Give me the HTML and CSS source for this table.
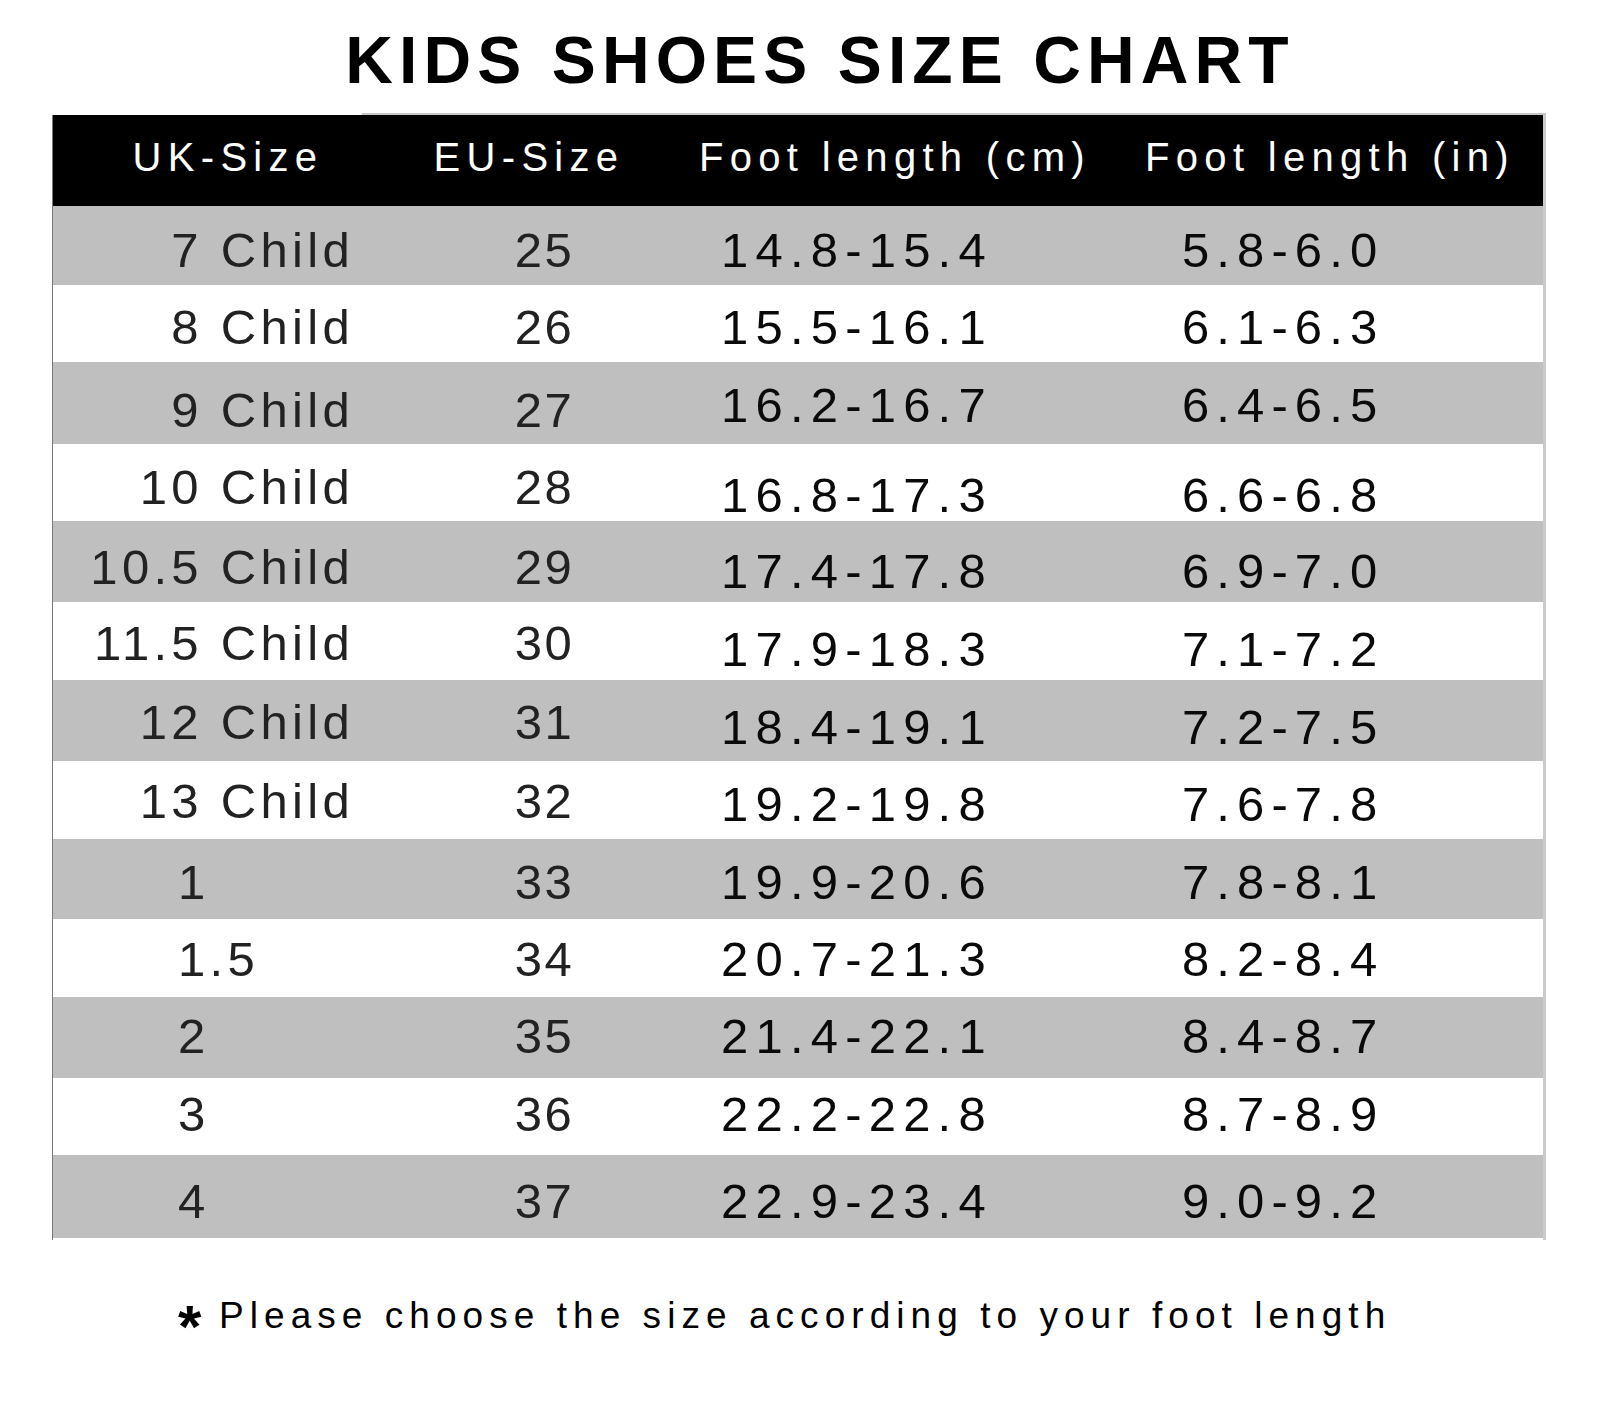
FILE: index.html
```html
<!DOCTYPE html>
<html lang="en">
<head>
<meta charset="utf-8">
<title>Kids Shoes Size Chart</title>
<link rel="stylesheet" href="styles.css">
</head>
<body>
<div class="page">
  <h1 class="title">KIDS SHOES SIZE CHART</h1>
  <div class="rule"></div>
  <div class="chart">
    <div class="head">
      <div class="hcell">UK-Size</div>
      <div class="hcell">EU-Size</div>
      <div class="hcell">Foot length (cm)</div>
      <div class="hcell">Foot length (in)</div>
    </div>
    <div class="rows">
      <div class="row gray">
        <div class="cell uk child dn9">7 Child</div><div class="cell eu dn9">25</div><div class="cell cm dn9">14.8-15.4</div><div class="cell in dn9">5.8-6.0</div>
      </div>
      <div class="row">
        <div class="cell uk child dn7">8 Child</div><div class="cell eu dn7">26</div><div class="cell cm dn7">15.5-16.1</div><div class="cell in dn7">6.1-6.3</div>
      </div>
      <div class="row gray">
        <div class="cell uk child dn14">9 Child</div><div class="cell eu dn14">27</div><div class="cell cm dn4">16.2-16.7</div><div class="cell in dn4">6.4-6.5</div>
      </div>
      <div class="row">
        <div class="cell uk child dn7">10 Child</div><div class="cell eu dn7">28</div><div class="cell cm dn23">16.8-17.3</div><div class="cell in dn23">6.6-6.8</div>
      </div>
      <div class="row gray">
        <div class="cell uk child dn11">10.5 Child</div><div class="cell eu dn11">29</div><div class="cell cm dn19">17.4-17.8</div><div class="cell in dn19">6.9-7.0</div>
      </div>
      <div class="row">
        <div class="cell uk child dn4">11.5 Child</div><div class="cell eu dn4">30</div><div class="cell cm dn16">17.9-18.3</div><div class="cell in dn16">7.1-7.2</div>
      </div>
      <div class="row gray">
        <div class="cell uk child dn3">12 Child</div><div class="cell eu dn3">31</div><div class="cell cm dn13">18.4-19.1</div><div class="cell in dn13">7.2-7.5</div>
      </div>
      <div class="row">
        <div class="cell uk child dn2">13 Child</div><div class="cell eu dn2">32</div><div class="cell cm dn8">19.2-19.8</div><div class="cell in dn8">7.6-7.8</div>
      </div>
      <div class="row gray">
        <div class="cell uk dn6">1</div><div class="cell eu dn6">33</div><div class="cell cm dn6">19.9-20.6</div><div class="cell in dn6">7.8-8.1</div>
      </div>
      <div class="row">
        <div class="cell uk dn2">1.5</div><div class="cell eu dn2">34</div><div class="cell cm dn2">20.7-21.3</div><div class="cell in dn2">8.2-8.4</div>
      </div>
      <div class="row gray">
        <div class="cell uk up3">2</div><div class="cell eu up3">35</div><div class="cell cm up3">21.4-22.1</div><div class="cell in up3">8.4-8.7</div>
      </div>
      <div class="row">
        <div class="cell uk up5">3</div><div class="cell eu up5">36</div><div class="cell cm up5">22.2-22.8</div><div class="cell in up5">8.7-8.9</div>
      </div>
      <div class="row gray">
        <div class="cell uk dn9">4</div><div class="cell eu dn9">37</div><div class="cell cm dn9">22.9-23.4</div><div class="cell in dn9">9.0-9.2</div>
      </div>
    </div>
  </div>
  <p class="note"><span class="star">*</span>Please choose the size according to your foot length</p>
</div>
</body>
</html>
```

FILE: styles.css
```css
* { box-sizing: border-box; }

html, body {
  margin: 0;
  padding: 0;
  background: #ffffff;
}

.page {
  width: 1600px;
  height: 1413px;
  overflow: hidden;
  font-family: "Liberation Sans", Arial, sans-serif;
  color: #000;
}

.title {
  margin: 0;
  padding-top: 27px;
  padding-left: 40px;
  height: 93px;
  font-size: 66px;
  line-height: 66px;
  font-weight: 700;
  letter-spacing: 6.1px;
  text-align: center;
  color: #000;
}

.rule {
  margin-top: 20px;
  margin-left: 362px;
  width: 1184px;
  height: 2px;
  background: #c6c6c6;
}

.chart {
  margin-left: 52px;
  width: 1494px;
  border-left: 1px solid #7a7a7a;
  border-right: 3px solid #cacaca;
  padding-bottom: 2px;
}

.head {
  display: grid;
  grid-template-columns: 344px 258px 474px 396px;
  height: 91px;
  background: #000;
  color: #fff;
}

.hcell {
  display: flex;
  align-items: center;
  justify-content: center;
  padding-left: 6px;
  padding-bottom: 6px;
  font-size: 40px;
  letter-spacing: 6.3px;
  white-space: nowrap;
}

.rows {
  display: grid;
  grid-template-rows: 79px 77px 82px 77px 81px 78px 81px 78px 80px 78px 81px 77px 83px;
}

.row {
  display: grid;
  grid-template-columns: 327px 326px 454px 1fr;
  background: #ffffff;
}

.row.gray {
  background: #bfbfbf;
}

.cell {
  display: flex;
  align-items: center;
  font-size: 49px;
  letter-spacing: 4.3px;
  white-space: nowrap;
}

.uk {
  color: #222;
  padding-left: 125px;
}

.uk.child {
  justify-content: flex-end;
  padding-left: 0;
  padding-right: 26px;
}

.eu {
  color: #222;
  justify-content: center;
  padding-left: 3px;
  letter-spacing: 2.6px;
}

.cm {
  color: #0a0a0a;
  padding-left: 15px;
  letter-spacing: 7.2px;
}

.in {
  color: #0a0a0a;
  padding-left: 22px;
  letter-spacing: 7.1px;
}

.dn2 { padding-top: 2px; }
.dn3 { padding-top: 3px; }
.dn4 { padding-top: 4px; }
.dn6 { padding-top: 6px; }
.dn7 { padding-top: 7px; }
.dn8 { padding-top: 8px; }
.dn9 { padding-top: 9px; }
.dn11 { padding-top: 11px; }
.dn13 { padding-top: 13px; }
.dn14 { padding-top: 14px; }
.dn16 { padding-top: 16px; }
.dn19 { padding-top: 19px; }
.dn23 { padding-top: 23px; }
.up3 { padding-bottom: 3px; }
.up5 { padding-bottom: 5px; }

.note {
  margin: 55px 0 0 0;
  padding-left: 178px;
  font-size: 37px;
  line-height: 42px;
  letter-spacing: 6.05px;
  white-space: nowrap;
  color: #000;
}

.star {
  display: inline-block;
  width: 41px;
  font-size: 60px;
  line-height: 0;
  font-weight: 700;
  letter-spacing: 0;
  vertical-align: -19px;
}
```
